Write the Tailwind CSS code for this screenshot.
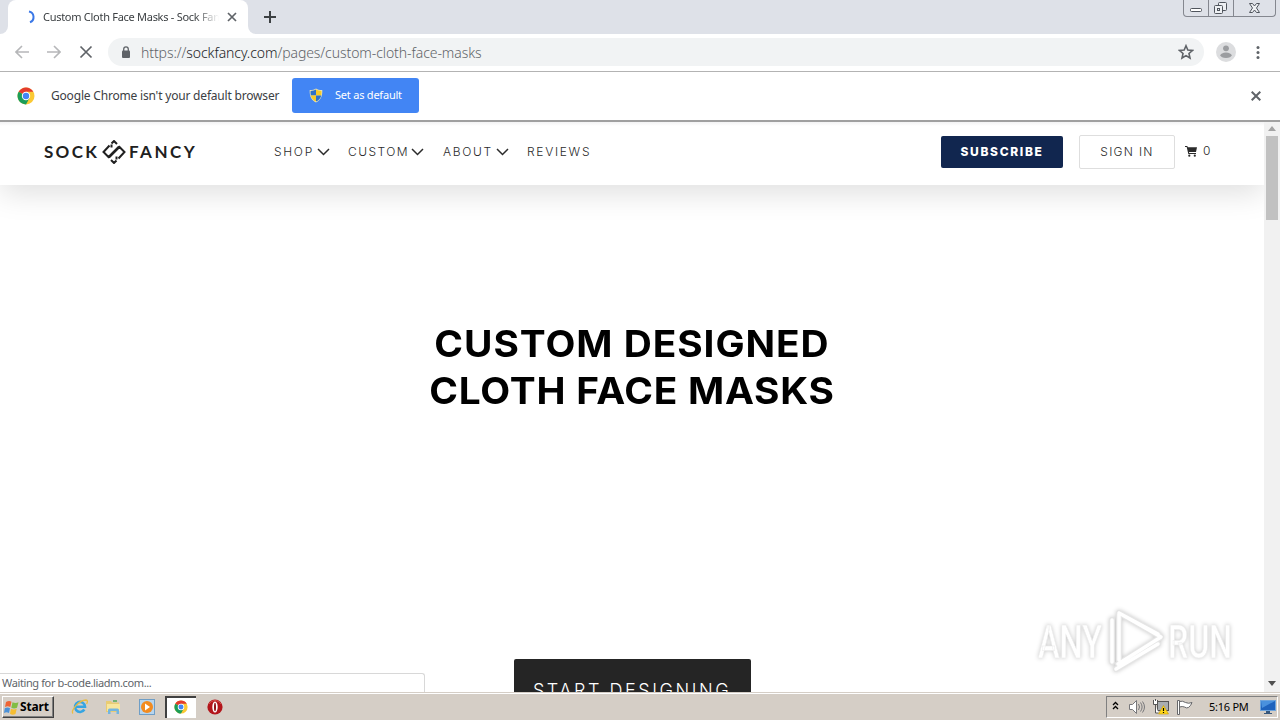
<!DOCTYPE html>
<html lang="en">
<head>
  <meta charset="UTF-8">
  <meta name="viewport" content="width=device-width, initial-scale=1.0">
  <title>Custom Cloth Face Masks - Sock Fancy</title>
  <script src="https://cdn.jsdelivr.net/npm/@tailwindcss/browser@4"></script>
</head>
<body class="w-[1280px] h-[720px] overflow-hidden bg-white flex flex-col font-['Noto_Sans',sans-serif] whitespace-nowrap">

  <!-- Tab strip -->
  <div class="h-[34px] shrink-0 bg-[#dee1e8] flex items-start">
    <div class="w-2 h-[34px] bg-white"><div class="size-full bg-[#dee1e8] rounded-br-lg"></div></div>
    <div class="w-60 h-[34px] bg-white rounded-t-lg flex items-center">
      <svg class="ml-[14px] size-4" viewBox="0 0 16 16" fill="none" stroke="#3b78e7" stroke-width="2"><path d="M7 2.5A5.6 5.6 0 0 1 8 13.2"/></svg>
      <span class="ml-[5px] w-[176px] overflow-hidden text-[11px] tracking-[-0.280px] text-[#3c4043] [mask-image:linear-gradient(to_right,black_86%,transparent)]">Custom Cloth Face Masks - Sock Fancy</span>
      <svg class="ml-2 size-[10px]" viewBox="0 0 10 10" stroke="#5f6368" stroke-width="1.7"><path d="M1 1l8 8M9 1L1 9"/></svg>
    </div>
    <div class="w-2 h-[34px] bg-white"><div class="size-full bg-[#dee1e8] rounded-bl-lg"></div></div>
    <svg class="ml-2 mt-[11px] size-3" viewBox="0 0 12 12" stroke="#3c4043" stroke-width="2"><path d="M0 6h12M6 0v12"/></svg>
    <div class="ml-auto mr-1 w-[93px] h-[17px] border border-t-0 border-[#84878f] rounded-b-[4px] flex text-[#50555d]">
      <div class="w-[25px] border-r border-[#84878f]">
        <svg class="w-6 h-4" viewBox="0 0 24 16" fill="#fff" stroke="currentColor"><rect x="6.500" y="8.500" width="11" height="3" rx="1"/></svg>
      </div>
      <div class="w-[25px] border-r border-[#84878f]">
        <svg class="w-6 h-4" viewBox="0 0 24 16" fill="#eef0f3" stroke="currentColor"><rect x="9.500" y="2.500" width="8" height="8" rx="1"/><rect x="5.500" y="5.500" width="8" height="8" rx="1"/><rect x="8.500" y="8.500" width="2" height="2"/></svg>
      </div>
      <svg class="w-[41px] h-4" viewBox="0 0 41 16" fill="#eef0f3" stroke="currentColor"><path d="M15.500 3.500h3l2 2.500 2-2.500h3l-3 4.500 3 4.500h-3l-2-2.500-2 2.500h-3l3-4.500z"/></svg>
    </div>
  </div>

  <!-- Toolbar -->
  <div class="h-[38px] shrink-0 border-b border-[#b3b3b3] flex items-center pb-px">
    <svg class="ml-[15px] size-[14px]" viewBox="0 0 14 14" fill="none" stroke="#b6b7b9" stroke-width="1.6"><path d="M14 7H1M7 1L1 7l6 6"/></svg>
    <svg class="ml-[18px] size-[14px]" viewBox="0 0 14 14" fill="none" stroke="#b6b7b9" stroke-width="1.6"><path d="M0 7h13M7 1l6 6-6 6"/></svg>
    <svg class="ml-[18px] size-[14px]" viewBox="0 0 14 14" stroke="#5f6368" stroke-width="1.7"><path d="M1.500 1.500l11 11M12.500 1.500l-11 11"/></svg>
    <div class="ml-[15px] w-[1096px] h-7 rounded-full bg-[#f1f3f4] flex items-center">
      <svg class="ml-[13px] w-[10px] h-[12px]" viewBox="0 0 10 12"><rect x="1" y="4.500" width="8" height="7.500" rx="1" fill="#5f6368"/><path d="M2.700 5V3.200a2.300 2.300 0 0 1 4.600 0V5" fill="none" stroke="#5f6368" stroke-width="1.300"/></svg>
      <span class="ml-[10px] w-[342px] text-[14px] font-light tracking-[-0.080px] text-[#5f6368]">https://<span class="text-[#202124]">sockfancy.com</span>/pages/custom-cloth-face-masks</span>
      <svg class="ml-auto mr-[10px] size-4" viewBox="0 0 14 14" fill="none" stroke="#5f6368" stroke-width="1.400"><path d="M7 1.500l1.600 3.700 4.100.4-3.100 2.700.9 4L7 10.200l-3.500 2.100.9-4-3.100-2.700 4.100-.4z"/></svg>
    </div>
    <svg class="ml-3 size-5" viewBox="0 0 20 20"><circle cx="10" cy="10" r="10" fill="#dcdddf"/><circle cx="10" cy="6.300" r="2.900" fill="#9b9da0"/><ellipse cx="10" cy="13.300" rx="5.600" ry="2.700" fill="#9b9da0"/></svg>
    <svg class="ml-[20px] w-1 h-[13px]" viewBox="0 0 4 13" fill="#5f6368"><circle cx="2" cy="1.600" r="1.500"/><circle cx="2" cy="6.500" r="1.500"/><circle cx="2" cy="11.400" r="1.500"/></svg>
  </div>

  <!-- Default browser infobar -->
  <div class="h-[50px] shrink-0 border-b-2 border-[#a0a0a0] flex items-center pb-px">
    <svg class="ml-[17px] size-[18px]" viewBox="0 0 18 18"><circle cx="9" cy="9" r="8.500" fill="#fbc934"/><path d="M9 9L1.640 4.750A8.500 8.500 0 0 1 16.360 4.750H9z" fill="#e33b2e"/><path d="M9 9L1.640 4.750A8.500 8.500 0 0 0 9 17.500L12.500 11z" fill="#1b9d58"/><circle cx="9" cy="9" r="4.200" fill="#fff"/><circle cx="9" cy="9" r="3.200" fill="#4285f4"/></svg>
    <span class="ml-4 w-[229px] text-[12px] tracking-[-0.190px] text-[#3c4043]">Google Chrome isn't your default browser</span>
    <button class="ml-3 w-[127px] h-[35px] rounded-[3px] bg-[#4285f4] text-white text-[11px] tracking-[-0.220px] flex items-center">
      <svg class="ml-[17px] w-[14px] h-[15px]" viewBox="0 0 14 15"><path d="M7 .5c2 1.300 4 1.600 6.300 1.500.2 6-1.300 10-6.300 12.500C2 12 .5 8 .7 2 3 2.100 5 1.800 7 .5z" fill="#e8e4b8"/><path d="M7 1.600v5.900H1.800Q1.400 5 1.600 3 5 3 7 1.600z" fill="#2f71c9"/><path d="M7 1.600v5.900h5.200q.4-2.500.2-4.500Q9 3 7 1.600z" fill="#f7ca28"/><path d="M7 7.500H1.800Q2.600 11.600 7 13.500z" fill="#f7ca28"/><path d="M7 7.500h5.200Q11.400 11.600 7 13.500z" fill="#2f71c9"/></svg>
      <span class="ml-3">Set as default</span>
    </button>
    <svg class="ml-auto mr-[19px] size-[10px]" viewBox="0 0 10 10" stroke="#5f6368" stroke-width="2"><path d="M.7.7l8.600 8.600M9.300.7L.7 9.300"/></svg>
  </div>

  <!-- Page -->
  <div class="h-[570px] shrink-0 relative overflow-hidden flex">
    <main class="w-[1264px] overflow-hidden font-[Inter,sans-serif]">
      <header class="h-[63px] relative bg-white bg-linear-to-b from-[#f3f3f4] to-white to-[4px] shadow-[0_8px_30px_rgba(0,0,0,0.13)] flex items-start text-[#2b2b2b]">
        <a class="ml-11 mt-[16px] flex items-center font-[Lato,sans-serif] font-bold text-[17px] leading-7 text-[#202020]">
          <span class="w-[58px] tracking-[2.300px]">SOCK</span>
          <svg class="w-6 h-6" viewBox="0 0 24 24" fill="none" stroke="#202020" stroke-width="2"><path d="M9.500 3.500L12 1l3 3M7.500 5.500L1.500 12l5 5L17 6.500M14.500 20.500L12 23l-3-3M16.500 18.500l6-6.500-5-5L7 17.500M9.500 4.500v3M14.500 19.500v-3"/></svg>
          <span class="ml-[3px] tracking-[2.500px]">FANCY</span>
        </a>
        <nav class="absolute left-[274px] top-[20px] flex text-[12px] leading-5 font-light tracking-[1.700px]">
          <a class="w-[74px] flex items-center"><span class="w-[43px]">SHOP</span><svg class="w-[13px] h-2" viewBox="0 0 13 8" fill="none" stroke="#2b2b2b" stroke-width="1.500"><path d="M1 1l5.500 5.500L12 1"/></svg></a>
          <a class="w-[95px] flex items-center"><span class="w-[63px] tracking-[1.450px]">CUSTOM</span><svg class="w-[13px] h-2" viewBox="0 0 13 8" fill="none" stroke="#2b2b2b" stroke-width="1.500"><path d="M1 1l5.500 5.500L12 1"/></svg></a>
          <a class="w-[84px] flex items-center"><span class="w-[53px]">ABOUT</span><svg class="w-[13px] h-2" viewBox="0 0 13 8" fill="none" stroke="#2b2b2b" stroke-width="1.500"><path d="M1 1l5.500 5.500L12 1"/></svg></a>
          <a>REVIEWS</a>
        </nav>
        <div class="ml-auto mr-[53px] mt-[13px] flex items-center text-[12px] tracking-[1.300px]">
          <a class="w-[122px] h-8 rounded-[2px] bg-[#11264f] text-white font-extrabold flex items-center justify-center tracking-[1.650px]">SUBSCRIBE</a>
          <a class="ml-4 w-24 h-[34px] rounded-[2px] border border-[#dedede] font-light flex items-center justify-center">SIGN IN</a>
          <svg class="ml-[10px] mb-[2px] w-3 h-[11px]" viewBox="0 0 12 11" fill="#2b2b2b"><path d="M0 0h2.300l.5 1.200H12L11 6H4l.2 1H11v1H3.300L1.700 1H0z"/><circle cx="4.300" cy="9.700" r="1.100"/><circle cx="9.800" cy="9.700" r="1.100"/></svg>
          <span class="ml-[6px] mb-[2px] w-2 font-light">0</span>
        </div>
      </header>
      <h1 class="mt-[135px] text-center text-[37px] leading-[47px] font-bold text-black tracking-[0.200px] scale-x-[1.05]"><span class="tracking-[0.900px]">CUSTOM DESIGNED</span><br><span class="tracking-[0.700px]">CLOTH FACE MASKS</span></h1>
      <a class="mt-[245px] mx-auto w-[237px] h-[62px] rounded-[2px] bg-[#252525] text-white text-[18px] font-light tracking-[2.550px] flex items-center justify-center">START DESIGNING</a>
    </main>

    <!-- Scrollbar -->
    <div class="w-4 bg-[#f1f1f1] flex flex-col items-center">
      <svg class="mt-[4px] w-2 h-[5px] shrink-0" viewBox="0 0 8 5" fill="#a3a3a3"><path d="M0 5l4-5 4 5z"/></svg>
      <div class="mt-[5px] w-3 h-[84px] bg-[#c1c1c1]"></div>
      <svg class="mt-auto mb-[6px] w-2 h-[5px] shrink-0" viewBox="0 0 8 5" fill="#505050"><path d="M0 0l4 5 4-5z"/></svg>
    </div>

    <!-- Status bubble -->
    <div class="absolute left-0 bottom-0 w-[425px] h-[19px] bg-white border-t border-r border-[#d8d8d8] rounded-tr-[3px] pl-[2px] text-[11px] leading-[18px] tracking-[-0.380px] text-[#606469]">Waiting for b-code.liadm.com...</div>

    <!-- Watermark -->
    <svg class="absolute left-[1030px] top-[480px] w-[212px] h-[76px] drop-shadow-[0_0_2px_rgba(0,0,0,0.22)]" viewBox="0 0 212 76">
      <g fill="#fff" font-family="Roboto, sans-serif" font-weight="500" font-size="46" stroke="#ececec" stroke-width=".6">
        <text x="8" y="56" textLength="64" lengthAdjust="spacingAndGlyphs">ANY</text>
        <text x="138" y="56" textLength="64" lengthAdjust="spacingAndGlyphs">RUN</text>
      </g>
      <g fill="none" stroke-linejoin="round" stroke-linecap="round">
        <path d="M89 58V11l42 24-43 27M82 60V18M89 11l39 21M86 67l42-25" stroke="#e5e5e5" stroke-width="6"/>
        <path d="M89 58V11l42 24-43 27M82 60V18M89 11l39 21M86 67l42-25" stroke="#fff" stroke-width="3.500"/>
      </g>
    </svg>
  </div>

  <!-- Taskbar -->
  <div class="h-7 shrink-0 bg-[#d5cec6] border-t border-[#d5cec6] shadow-[inset_0_1px_0_#fff] relative flex items-center">
    <div class="ml-[2px] mt-[1px] w-[52px] h-[22px] border border-t-white border-l-white border-r-[#404040] border-b-[#404040] shadow-[inset_-1px_-1px_0_#808080] flex items-center">
      <svg class="ml-[1px] w-[15px] h-[15px]" viewBox="0 0 15 15"><path d="M2 2q3-2 5.500-.3L6.300 7Q3.700 5.500 1 7z" fill="#ef6535"/><path d="M8.500 2.200q3 1.600 6 0L13 7.700q-3 1.600-5.700 0z" fill="#82bd45"/><path d="M.8 8.200q2.700-1.500 5.200 0L5 13q-2.500-1.500-5 0z" fill="#4b91d8"/><path d="M7 8.700q2.700 1.500 5.700 0L11.500 14q-3 1.500-5.500-.3z" fill="#f5bd32"/></svg>
      <span class="ml-[1px] text-[12px] font-bold text-black tracking-[-0.150px]">Start</span>
    </div>
    <!-- Internet Explorer -->
    <svg class="ml-[17px] size-[17px]" viewBox="0 0 17 17" fill="none"><path d="M13.300 11.500a5 5 0 1 1 .7-2.700H4" stroke="#36a5e2" stroke-width="2.600"/><path d="M2 15.500C-1 13 8 2 15 2c2 .1 1.500 2.500.6 4" stroke="#e9bc42" stroke-width="1.300"/></svg>
    <!-- Explorer -->
    <svg class="ml-[17px] w-4 h-4" viewBox="0 0 16 16"><path d="M1 2h5l1 1.500h7V13H1z" fill="#e9cc73"/><path d="M2 5h13v7H2z" fill="#f8e69d"/><path d="M3 15v-4q0-1.500 1.500-1.500h8Q14 9.500 14 11v4h-2.500v-3h-6v3z" fill="#74b5df"/><path d="M8 2h4" stroke="#55a956" stroke-width="1.500"/></svg>
    <!-- Media Player -->
    <svg class="ml-[18px] w-4 h-4" viewBox="0 0 16 16"><rect x=".5" y=".5" width="15" height="15" fill="#b7d5ee" stroke="#6f9ec6"/><circle cx="8" cy="8" r="6" fill="#f28b20"/><path d="M6 4.500l5 3.500-5 3.500z" fill="#fff"/></svg>
    <!-- Chrome, active -->
    <div class="ml-[10px] w-[31px] h-[22px] bg-white border-t-2 border-l-2 border-[#404040] flex items-center justify-center">
      <svg class="size-[14px] mr-[2px] mb-px" viewBox="0 0 18 18"><circle cx="9" cy="9" r="8.500" fill="#fbc934"/><path d="M9 9L1.640 4.750A8.500 8.500 0 0 1 16.360 4.750H9z" fill="#e33b2e"/><path d="M9 9L1.640 4.750A8.500 8.500 0 0 0 9 17.500L12.500 11z" fill="#1b9d58"/><circle cx="9" cy="9" r="4.200" fill="#fff"/><circle cx="9" cy="9" r="3.200" fill="#4285f4"/></svg>
    </div>
    <!-- Opera -->
    <svg class="ml-[11px] size-4" viewBox="0 0 16 16"><circle cx="8" cy="8" r="7.600" fill="#b3151b"/><path d="M2 5a7 7 0 0 1 12 0" stroke="#d9534f" fill="none"/><ellipse cx="8" cy="8" rx="2.700" ry="5.600" fill="#fff"/><ellipse cx="8" cy="8" rx="1" ry="4.300" fill="#8e0f14"/></svg>

    <!-- Tray -->
    <div class="ml-auto mr-[2px] mt-[1px] w-[172px] h-[22px] border border-t-[#808080] border-l-[#808080] border-r-white border-b-white flex items-center">
      <svg class="ml-[5px] mb-[3px] w-[7px] h-[9px]" viewBox="0 0 7 9" fill="none" stroke="#000" stroke-width="1.300"><path d="M1 4l2.500-2.500L6 4M1 8l2.500-2.500L6 8"/></svg>
      <svg class="ml-[10px] w-4 h-[14px]" viewBox="0 0 16 14" fill="none" stroke="#77777a"><path d="M.5 4.500h3l4-4v13l-4-4h-3z" fill="#fff"/><path d="M9.500 4q2 3 0 6M11.500 2.500q3.200 4.500 0 9M13.500 1.500q4 5.500 0 11"/></svg>
      <svg class="ml-2 w-4 h-4" viewBox="0 0 16 16"><rect x="4.500" y="2.500" width="11" height="9" fill="#a9adb0" stroke="#555"/><path d="M.5 1v4.500h4V1M2.500 0v2M2.500 6v8h3" fill="#fff" stroke="#555"/><path d="M10.500 6.500L15.500 15h-10z" fill="#ffd71a" stroke="#c79800" stroke-width=".6"/><path d="M10.500 9v3M10.500 13v1" stroke="#000" stroke-width="1.200"/></svg>
      <svg class="ml-2 w-4 h-[15px]" viewBox="0 0 16 15" fill="#fff" stroke="#66676a"><path d="M.5 14.500V.5h2v14zM2.500 1.500q3-1 6 1 3 1.500 6.500 0-1 3-3.500 5-2 1-4-.5-2-1-5 0z"/></svg>
      <span class="ml-[16px] w-10 text-[11px] tracking-[-0.250px] text-black">5:16 PM</span>
      <svg class="ml-[11px] w-4 h-[14px]" viewBox="0 0 16 14"><rect x=".5" y=".5" width="15" height="10" fill="#1f63bd" stroke="#6fa4db"/><path d="M1 1h14L2 8z" fill="#4a91dd"/><path d="M6 11h4v2h2v1H4v-1h2z" fill="#37577b"/></svg>
    </div>
  </div>
</body>
</html>
